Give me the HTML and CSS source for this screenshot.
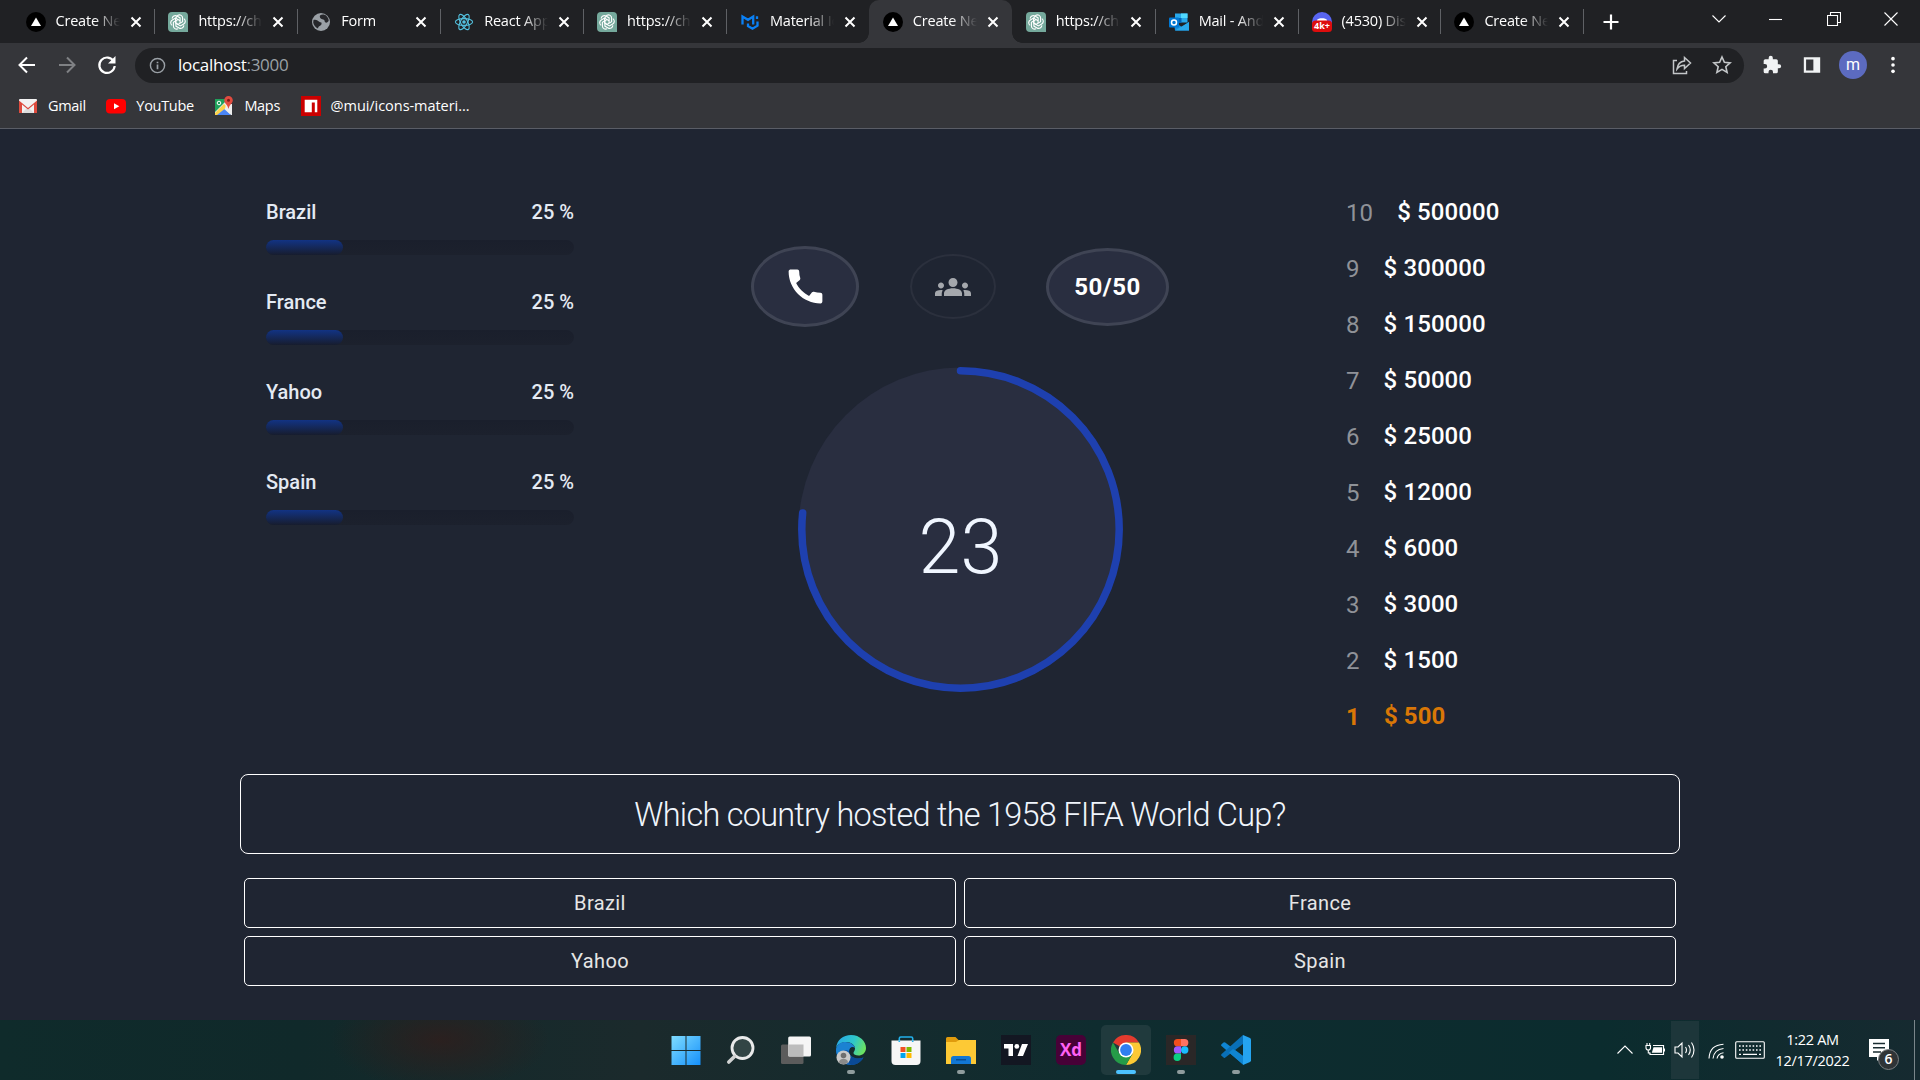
FILE: index.html
```html
<!DOCTYPE html>
<html lang="en">
<head>
<meta charset="utf-8">
<title>Create Next App</title>
<link rel="stylesheet" href="styles.css">
</head>
<body>
<svg class="defs" aria-hidden="true">
  <symbol id="i-vercel" viewBox="0 0 20 20"><circle cx="10" cy="10" r="10" fill="#000"/><path d="M10 5.4l5 8.700H5z" fill="#fff"/></symbol>
  <symbol id="i-gpt" viewBox="0 0 20 20"><path d="M4 0h12a4 4 0 0 1 4 4v16H4a4 4 0 0 1-4-4V4a4 4 0 0 1 4-4z" fill="#75a99c"/><g fill="none" stroke="#fff" stroke-width="1.1"><path d="M10 3.200a3.200 3.200 0 0 1 4.600 2.900v3.700L10 12.400 7.600 11V6.200z"/><path d="M10 3.200a3.200 3.200 0 0 1 4.600 2.900v3.700L10 12.400" transform="rotate(60 10 10)"/><path d="M10 3.200a3.200 3.200 0 0 1 4.600 2.900v3.700L10 12.400" transform="rotate(120 10 10)"/><path d="M10 3.200a3.200 3.200 0 0 1 4.600 2.900v3.700L10 12.400" transform="rotate(180 10 10)"/><path d="M10 3.200a3.200 3.200 0 0 1 4.600 2.900v3.700L10 12.400" transform="rotate(240 10 10)"/><path d="M10 3.200a3.200 3.200 0 0 1 4.600 2.900v3.700L10 12.400" transform="rotate(300 10 10)"/></g></symbol>
  <symbol id="i-x" viewBox="0 0 12 12"><path d="M1.500 1.500l9 9m0-9l-9 9" stroke="#fff" stroke-width="2" fill="none"/></symbol>
</svg>

<header class="tabs">
  <div class="tab"><svg class="fav"><use href="#i-vercel"/></svg><span class="tab-title">Create Next</span><svg class="close"><use href="#i-x"/></svg></div>
  <div class="tab"><svg class="fav"><use href="#i-gpt"/></svg><span class="tab-title">https://chat</span><svg class="close"><use href="#i-x"/></svg></div>
  <div class="tab"><svg class="fav" viewBox="0 0 20 20"><circle cx="10" cy="10" r="9" fill="#9aa0a6"/><path d="M2.500 8c2-1 4 .2 5.500 1.500s3 .3 2.500 2.500-3 1.500-3.500 4.500c-2.500-1-4.500-3.500-4.800-6z M9 3.500c2-1.500 5-1 6.500.5s2.200 3 2.200 5c-1 1-1.500 2-3 1.500s-.5-2.500-2.500-3-4-1.500-3.200-4z" fill="#26272b"/></svg><span class="tab-title">Form</span><svg class="close"><use href="#i-x"/></svg></div>
  <div class="tab"><svg class="fav" viewBox="0 0 20 20"><g fill="none" stroke="#53c1de" stroke-width="1.1"><ellipse cx="10" cy="10" rx="8.600" ry="3.400"/><ellipse cx="10" cy="10" rx="8.600" ry="3.400" transform="rotate(60 10 10)"/><ellipse cx="10" cy="10" rx="8.600" ry="3.400" transform="rotate(120 10 10)"/></g><circle cx="10" cy="10" r="1.800" fill="#53c1de"/></svg><span class="tab-title">React App</span><svg class="close"><use href="#i-x"/></svg></div>
  <div class="tab"><svg class="fav"><use href="#i-gpt"/></svg><span class="tab-title">https://chat</span><svg class="close"><use href="#i-x"/></svg></div>
  <div class="tab last-before"><svg class="fav" viewBox="0 0 20 20"><path d="M2.500 12.500V4.500l5.500 3.300 5.200-3.300v8M8 11.500v2.500l4.500 2.700 5-3V9.500M17 7V4.200" fill="none" stroke="#0a80f5" stroke-width="2.300"/></svg><span class="tab-title">Material Icons</span><svg class="close"><use href="#i-x"/></svg></div>
  <div class="tab active"><svg class="fav"><use href="#i-vercel"/></svg><span class="tab-title">Create Next</span><svg class="close"><use href="#i-x"/></svg></div>
  <div class="tab"><svg class="fav"><use href="#i-gpt"/></svg><span class="tab-title">https://chat</span><svg class="close"><use href="#i-x"/></svg></div>
  <div class="tab"><svg class="fav" viewBox="0 0 20 20"><path d="M6 1.500h12.500v9H6z" fill="#28a8ea"/><path d="M12 1.500h6.500v4.500H12z" fill="#50d9ff"/><path d="M6 6h6.500v5H6z" fill="#0364b8"/><path d="M5 10l8 5 7-5v8.500H6z" fill="#1490df"/><path d="M20 10v8.500H6z" fill="#28a8ea"/><rect y="5.500" width="10" height="10" rx="1" fill="#0078d4"/><circle cx="5" cy="10.500" r="2.500" fill="none" stroke="#fff" stroke-width="1.500"/></svg><span class="tab-title">Mail - Andrew</span><svg class="close"><use href="#i-x"/></svg></div>
  <div class="tab"><svg class="fav" viewBox="0 0 20 20"><circle cx="10" cy="10" r="10" fill="#5865f2"/><path d="M5 8c1-2.500 9-2.500 10 0v3H5z" fill="#fff"/><rect y="8.500" width="20" height="11.500" rx="3.500" fill="#dd0d0d"/><text x="10" y="17.300" class="fav-count">4k+</text></svg><span class="tab-title">(4530) Discord</span><svg class="close"><use href="#i-x"/></svg></div>
  <div class="tab"><svg class="fav"><use href="#i-vercel"/></svg><span class="tab-title">Create Next</span><svg class="close"><use href="#i-x"/></svg></div>
  <svg class="new-tab" viewBox="0 0 16 16"><path d="M8 .5v15M.5 8h15" stroke="#fff" stroke-width="2.200"/></svg>
  <div class="win-buttons">
    <svg viewBox="0 0 14 14"><path d="M.5 3.500L7 10l6.500-6.500" class="thin"/></svg>
    <svg viewBox="0 0 14 14"><path d="M0 7.500h13" class="thin"/></svg>
    <svg viewBox="0 0 14 14"><path d="M.5 3.500h10v10H.5zM3.500 3V.500h10v10H11" class="thin"/></svg>
    <svg viewBox="0 0 14 14"><path d="M.5.5l13 13m0-13l-13 13" class="thin"/></svg>
  </div>
</header>

<div class="toolbar">
  <svg class="nav" viewBox="0 0 24 24"><path d="M20 12H5m7-7.500L4.500 12l7.500 7.500" fill="none" stroke="#fff" stroke-width="2"/></svg>
  <svg class="nav" viewBox="0 0 24 24"><path d="M4 12h15m-7-7.500l7.500 7.500-7.500 7.500" fill="none" stroke="#7f8184" stroke-width="2"/></svg>
  <svg class="nav" viewBox="0 0 24 24"><path d="M18.800 8.500A7.700 7.700 0 1 0 19.700 13" fill="none" stroke="#fff" stroke-width="2.200"/><path d="M20.500 3v7.500H13z" fill="#fff"/></svg>
  <div class="omnibox">
    <svg class="info" viewBox="0 0 18 18"><circle cx="9" cy="9" r="7.500" fill="none" stroke="#9aa0a6" stroke-width="1.500"/><path d="M9 8v5M9 5v1.700" stroke="#9aa0a6" stroke-width="1.800"/></svg>
    <span class="url">localhost<span class="port">:3000</span></span>
    <svg class="share" viewBox="0 0 20 20"><path d="M5 5.500H1.500v13h13V16M12.500 2.500l6 5.500-6 5.500v-3.200c-3.500 0-5.500 1-7.500 3.700.5-4 3-7.500 7.500-8z" fill="none" stroke="#c4c7c9" stroke-width="1.500"/></svg>
    <svg class="star" viewBox="0 0 20 20"><path d="M10 2l2.400 5.300 5.700.6-4.300 3.800 1.300 5.700L10 14.400l-5.100 3 1.300-5.700L1.900 7.900l5.700-.6z" fill="none" stroke="#c4c7c9" stroke-width="1.600"/></svg>
  </div>
  <div class="tools">
    <svg viewBox="0 0 24 24"><path d="M20.500 11H19V7a2 2 0 0 0-2-2h-4V3.500a2.500 2.500 0 0 0-5 0V5H4a2 2 0 0 0-2 2v3.800h1.500a2.700 2.700 0 0 1 0 5.400H2V20a2 2 0 0 0 2 2h3.800v-1.500a2.700 2.700 0 0 1 5.400 0V22H17a2 2 0 0 0 2-2v-4h1.500a2.500 2.500 0 0 0 0-5z" fill="#f1f3f4"/></svg>
    <svg viewBox="0 0 22 22"><path d="M2 2.500h18v17H2z M4.500 5v12h8V5z" fill="#f1f3f4" fill-rule="evenodd"/></svg>
    <span class="avatar">m</span>
    <svg viewBox="0 0 22 22"><circle cx="11" cy="4" r="2" fill="#fff"/><circle cx="11" cy="11" r="2" fill="#fff"/><circle cx="11" cy="18" r="2" fill="#fff"/></svg>
  </div>
</div>

<nav class="bookmarks">
  <span class="bm"><svg viewBox="0 0 20 20"><rect x="1" y="3" width="18" height="14" rx="1" fill="#f2f2f2"/><path d="M4 17l6-6 6 6z" fill="#ddd"/><path d="M1 17V4.500l9 7.500 9-7.500V17h-3V8.500L10 13.500 4 8.500V17z" fill="#dd4b3e"/></svg>Gmail</span>
  <span class="bm"><svg viewBox="0 0 20 20"><rect y="3" width="20" height="14.500" rx="4" fill="#f00"/><path d="M8 7.200l5.300 3L8 13.300z" fill="#fff"/></svg>YouTube</span>
  <span class="bm"><svg viewBox="0 0 20 20"><path d="M1 3h15v16H1z" fill="#e8e8e8"/><path d="M1 3h13L1 16z" fill="#1fa15b"/><path d="M2 19l7-7 8 7z" fill="#4a86f7"/><path d="M1 17l9-9 3 3-10 8H1z" fill="#fed34a"/><path d="M12 8h6v11h-1l-6-6z" fill="#eee"/><circle cx="5" cy="7" r="1.800" fill="none" stroke="#fff"/><path d="M14.500 0a4.300 4.300 0 0 1 4.300 4.300c0 3-3.300 4.200-4.300 8.700-1-4.500-4.300-5.700-4.300-8.700A4.300 4.300 0 0 1 14.500 0z" fill="#e14b3f"/><circle cx="14.500" cy="4.300" r="1.500" fill="#7c1c18"/></svg>Maps</span>
  <span class="bm wide"><svg viewBox="0 0 20 20"><path d="M0 0h20v20H0z" fill="#cb0000"/><path d="M3.700 3.700h12.600v12.600h-2.500V6.500h-3v9.800H3.700z" fill="#fff"/></svg>@mui/icons-materi...</span>
</nav>

<main class="page">
  <section class="board">
    <div class="poll">
      <div class="poll-item"><div class="poll-label"><span>Brazil</span><span>25 %</span></div><div class="bar"><div class="fill" style="width:25%"></div></div></div>
      <div class="poll-item"><div class="poll-label"><span>France</span><span>25 %</span></div><div class="bar"><div class="fill" style="width:25%"></div></div></div>
      <div class="poll-item"><div class="poll-label"><span>Yahoo</span><span>25 %</span></div><div class="bar"><div class="fill" style="width:25%"></div></div></div>
      <div class="poll-item"><div class="poll-label"><span>Spain</span><span>25 %</span></div><div class="bar"><div class="fill" style="width:25%"></div></div></div>
    </div>
    <div class="center">
      <div class="lifelines">
        <div class="life phone"><svg viewBox="0 0 24 24"><path d="M20.010 15.380c-1.230 0-2.420-.2-3.530-.56-.35-.12-.74-.03-1.010.24l-1.570 1.970c-2.830-1.350-5.480-3.900-6.890-6.830l1.950-1.660c.27-.28.35-.67.24-1.020-.37-1.110-.56-2.300-.56-3.530 0-.54-.45-.99-.99-.99H4.190C3.650 3 3 3.240 3 3.990 3 13.280 10.730 21 20.010 21c.71 0 .99-.63.99-1.180v-3.450c0-.54-.45-.99-.99-.99z" fill="#fff"/></svg></div>
        <div class="life audience"><svg viewBox="0 0 24 24"><path d="M12 12.750c1.630 0 3.070.39 4.240.9 1.080.48 1.760 1.560 1.760 2.730V18H6v-1.610c0-1.180.68-2.260 1.760-2.730 1.170-.52 2.610-.91 4.240-.91zM4 13c1.100 0 2-.9 2-2s-.9-2-2-2-2 .9-2 2 .9 2 2 2zm1.130 1.100c-.37-.06-.74-.1-1.130-.1-.99 0-1.930.21-2.780.58C.48 14.900 0 15.620 0 16.430V18h4.500v-1.610c0-.83.23-1.610.63-2.290zM20 13c1.100 0 2-.9 2-2s-.9-2-2-2-2 .9-2 2 .9 2 2 2zm4 3.430c0-.81-.48-1.530-1.220-1.850-.85-.37-1.790-.58-2.780-.58-.39 0-.76.04-1.130.1.4.68.63 1.460.63 2.290V18H24v-1.570zM12 6c1.660 0 3 1.340 3 3s-1.340 3-3 3-3-1.340-3-3 1.340-3 3-3z" fill="#a5a8ad"/></svg></div>
        <div class="life fifty">50/50</div>
      </div>
      <div class="timer">
        <svg viewBox="0 0 325 325"><circle cx="162.500" cy="162.500" r="162" fill="#292e40"/><circle cx="162.500" cy="162.500" r="158.700" pathLength="360" class="arc"/></svg>
        <span class="seconds">23</span>
      </div>
    </div>
    <ol class="prizes">
      <li><span class="rank">10</span><span class="sum">$ 500000</span></li>
      <li><span class="rank">9</span><span class="sum">$ 300000</span></li>
      <li><span class="rank">8</span><span class="sum">$ 150000</span></li>
      <li><span class="rank">7</span><span class="sum">$ 50000</span></li>
      <li><span class="rank">6</span><span class="sum">$ 25000</span></li>
      <li><span class="rank">5</span><span class="sum">$ 12000</span></li>
      <li><span class="rank">4</span><span class="sum">$ 6000</span></li>
      <li><span class="rank">3</span><span class="sum">$ 3000</span></li>
      <li><span class="rank">2</span><span class="sum">$ 1500</span></li>
      <li class="current"><span class="rank">1</span><span class="sum">$ 500</span></li>
    </ol>
  </section>
  <h1 class="question">Which country hosted the 1958 FIFA World Cup?</h1>
  <div class="answers">
    <div class="answer">Brazil</div><div class="answer">France</div>
    <div class="answer">Yahoo</div><div class="answer">Spain</div>
  </div>
</main>

<footer class="taskbar">
  <div class="side"></div>
  <div class="apps">
    <div class="app"><svg viewBox="0 0 30 30"><defs><linearGradient id="gw" x1="0" y1="0" x2="1" y2="1"><stop offset="0" stop-color="#7fdcff"/><stop offset="1" stop-color="#1590fb"/></linearGradient></defs><path d="M.5 1.500h14v14H.5zM15.500 1.500h14v14h-14zM.5 16.500h14v14H.5zM15.500 16.500h14v14h-14z" transform="translate(0 -.5)" fill="url(#gw)"/></svg></div>
    <div class="app"><svg viewBox="0 0 30 30"><circle cx="16.500" cy="13" r="10.500" fill="#324545" stroke="#e9eaea" stroke-width="2.800"/><path d="M8.500 21.500L2.800 27" stroke="#d0d2d2" stroke-width="3.600" stroke-linecap="round"/></svg></div>
    <div class="app"><svg viewBox="0 0 30 30"><rect y="9.500" width="22.500" height="19.500" rx="1.500" fill="#5c5c5c"/><rect x="7.200" y="1.500" width="22.800" height="20" rx="1.500" fill="#f5f5f5"/><path d="M7.200 9.500h15.300v12H8.700a1.500 1.500 0 0 1-1.500-1.500z" fill="#bcbcbc"/></svg></div>
    <div class="app open"><svg viewBox="0 0 30 30"><defs><linearGradient id="ge" x1="0" y1=".3" x2="1" y2=".6"><stop offset="0" stop-color="#27a9e6"/><stop offset=".55" stop-color="#2fc7c9"/><stop offset="1" stop-color="#6ee35c"/></linearGradient></defs><path d="M0 15c0 8 6 15 15 15 5 0 9-2 12.500-7.500-5 2-12 1-14-4-1-3 0-5 1.500-6.500L8 8C3 8 .5 11 0 15z" fill="#0d5fb5"/><path d="M15 30c5 0 9-2 12.500-7.500-5 2-12 1-14-4C9 17 10 27 15 30z" fill="#0a4a96"/><path d="M0 13C1 5 7 0 15 0c9 0 15 6.500 15 13 0 5-4 7.500-7.500 7.500-3 0-5-1-5-2.500s1.500-2 1.500-4.500C19 10 15 7 10.500 7 5 7 1.500 9.500 0 13z" fill="url(#ge)"/><path d="M0 15C.5 9.500 5 7 9.500 7c5 0 9 3 9.500 6-2-2-6-1-6 3-5-3-9 2-11 5-1.200-2-2-4-2-6z" fill="#1b82d2"/><circle cx="7.500" cy="22.500" r="7" fill="#c9c9c9"/><circle cx="7.500" cy="20.500" r="2.800" fill="#6e6e6e"/><path d="M3 27.500c0-5 9-5 9 0-2 2.200-7 2.200-9 0z" fill="#8a8a8a"/></svg></div>
    <div class="app"><svg viewBox="0 0 30 30"><path d="M8.300 7V3.500Q8.300 2 9.800 2h10.400q1.500 0 1.500 1.500V7" fill="none" stroke="#22b0ea" stroke-width="1.600"/><path d="M.5 5.500h29V26a4 4 0 0 1-4 4h-21a4 4 0 0 1-4-4z" fill="#f6f6f6"/><path d="M8.300 7V5.500M21.700 7V5.500" stroke="#22b0ea" stroke-width="1.600"/><path d="M9.500 12h5v5h-5z" fill="#f25022"/><path d="M15.500 12h5v5h-5z" fill="#7fba00"/><path d="M9.500 18h5v5h-5z" fill="#00a4ef"/><path d="M15.500 18h5v5h-5z" fill="#ffb900"/></svg></div>
    <div class="app open"><svg viewBox="0 0 30 30"><path d="M0 3.500Q0 2 1.500 2h8L13 5.500h15.500Q30 5.500 30 7v8H0z" fill="#e09b0d"/><path d="M0 7h10l3-2h17v24H0z" fill="#fdc935"/><path d="M5 29v-5.500q0-2.500 2.500-2.500h15q2.500 0 2.500 2.500V29z" fill="#1277d3"/><path d="M10 24h10v1.500H10z" fill="#084e94"/></svg></div>
    <div class="app"><svg viewBox="0 0 30 30"><path d="M0 0h30v30H0z" fill="#131722"/><path d="M3 9h9v12H7.500v-7.500H3zM21 9h6l-5 12h-5.500z" fill="#fff"/><circle cx="15.800" cy="11.400" r="2.400" fill="#fff"/></svg></div>
    <div class="app"><svg viewBox="0 0 30 30"><rect width="30" height="30" rx="5" fill="#470137"/><text x="15" y="21.200" class="xd">Xd</text></svg></div>
    <div class="app open focused"><svg viewBox="0 0 30 30"><path d="M15 15L2 7.500A15 15 0 0 1 28 7.500H15z" fill="#e33b2e"/><path d="M28 7.500A15 15 0 0 1 15 30l6.500-11.200L15 7.500z" fill="#fcc934"/><path d="M2 7.500A15 15 0 0 0 15 30l6.500-11.200H8.500z" fill="#259b48"/><circle cx="15" cy="15" r="7.500" fill="#fff"/><circle cx="15" cy="15" r="5.900" fill="#2f7ef0"/></svg></div>
    <div class="app open"><svg viewBox="0 0 30 30"><path d="M0 0h30v30H0z" fill="#2a2727"/><path d="M15 4h-3.500a3.600 3.600 0 0 0 0 7.300H15z" fill="#f24e1e"/><path d="M15 4h3.700a3.600 3.600 0 0 1 0 7.300H15z" fill="#ff7262"/><path d="M15 11.300h-3.500a3.600 3.600 0 0 0 0 7.300H15z" fill="#a259ff"/><circle cx="18.700" cy="15" r="3.700" fill="#1abcfe"/><path d="M15 18.600h-3.500a3.700 3.700 0 1 0 3.500 3.700z" fill="#0acf83"/></svg></div>
    <div class="app open"><svg viewBox="0 0 30 30"><path d="M22 29.500L.5 11q-.8-.9 0-1.700l2-1.800q.8-.6 1.700 0L22 21z" fill="#0f85d2"/><path d="M.3 20.600q-.4-.8.3-1.500L22 .1V9L4 22.700q-.8.500-1.500-.1z" fill="#0970b8"/><path d="M22 29.500L8 17.500 12 14l10 7z" fill="#0f85d2"/><path d="M22 0l7 3q1 .5 1 1.700v20.600q0 1.200-1 1.700l-7 3z" fill="#25a4f0"/></svg></div>
  </div>
  <div class="tray">
    <svg class="chev" viewBox="0 0 16 10"><path d="M.5 8.500L8 1l7.500 7.500" class="thin"/></svg>
    <svg class="batt" viewBox="0 0 20 14"><path d="M8 2.500h10.500v9H5V9.500" fill="none" stroke="#fff" stroke-width="1.200"/><path d="M8.500 4.300h8.500v5.400H6.800zM19 5.500h1v3h-1z" fill="#fff"/><path d="M1 2.500h4.500v2.300a2.200 2.200 0 0 1-4.500 0zM2 0v2.500M4.700 0v2.500M3.300 7v3H5" fill="none" stroke="#fff" stroke-width="1.100"/></svg>
    <span class="vol"><svg viewBox="0 0 22 20"><path d="M1 7h3l4-4v14l-4-4H1zM11.500 7q2 3 0 6M14.500 5q3.500 5 0 10M17.500 2.500q5 7.500 0 15" class="thin"/></svg></span>
    <svg class="wifi" viewBox="0 0 16 16"><g class="thin"><path d="M1 15.500Q1.500 2 15.500 1.200"/><path d="M5 15.500Q6 6.500 15.500 5.500"/><path d="M9 15.500Q10 10.500 15.500 9.800"/></g><circle cx="14" cy="14" r="1.800" fill="#fff"/></svg>
    <svg class="kbd" viewBox="0 0 30 18"><rect x=".7" y=".7" width="28.600" height="16.600" rx="1" class="thin"/><path d="M4 5h22M4 9h22" stroke="#fff" stroke-width="1.500" stroke-dasharray="1.600 1.800"/><path d="M4 13.300h2m2 0h14m2 0h2" stroke="#fff" stroke-width="1.300"/></svg>
    <div class="clock"><span>1:22 AM</span><span>12/17/2022</span></div>
    <div class="notif"><svg viewBox="0 0 20 22"><path d="M0 0h20v18h-8l-4 4v-4H0z" fill="#fff"/><path d="M4 4.500h12M4 8.700h12M4 13h8" stroke="#1a2c31" stroke-width="1.400"/></svg><span class="badge">6</span></div>
  </div>
</footer>
</body>
</html>
```

FILE: styles.css
```css
* { box-sizing: border-box; }

body {
  margin: 0;
  width: 1920px;
  height: 1080px;
  overflow: hidden;
  display: flex;
  flex-direction: column;
  background: #1f2532;
  font-family: "Open Sans", "Noto Sans", sans-serif;
  color: #fff;
}

svg { display: block; flex: none; }
.defs { position: absolute; width: 0; height: 0; }
.thin { fill: none; stroke: #fff; stroke-width: 1.1; }

/* Browser tabs */
.tabs {
  height: 43px;
  flex: none;
  display: flex;
  align-items: center;
  padding-left: 11.5px;
  background: #202124;
}
.tab {
  position: relative;
  width: 142.9px;
  height: 43px;
  flex: none;
  display: flex;
  align-items: center;
  padding-left: 14px;
}
.tab::after {
  content: "";
  position: absolute;
  right: -1px;
  top: 9px;
  width: 1px;
  height: 25px;
  background: #5f6165;
}
.tab.active::after, .last-before::after {
  content: none;
}
.tab.active { background: #35363a; border-radius: 10px 10px 0 0; }
.tab.active::before {
  content: "";
  position: absolute;
  left: -10px;
  right: -10px;
  bottom: 0;
  height: 10px;
  background:
    radial-gradient(circle at 0 0, transparent 9.5px, #35363a 10px) left / 10px 10px no-repeat,
    radial-gradient(circle at 100% 0, transparent 9.5px, #35363a 10px) right / 10px 10px no-repeat;
}
.fav { width: 20px; height: 20px; }
.fav-count { font: 700 9px "Open Sans", sans-serif; fill: #fff; text-anchor: middle; }
.tab-title {
  width: 64px;
  margin-left: 10px;
  overflow: hidden;
  white-space: nowrap;
  font-size: 14.5px;
  letter-spacing: -0.2px;
  line-height: 24px;
  margin-top: -2px;
  -webkit-mask-image: linear-gradient(90deg, #000 60%, transparent);
  mask-image: linear-gradient(90deg, #000 60%, transparent);
}
.close { width: 12px; height: 12px; margin-left: 10px; }
.new-tab { width: 16px; height: 16px; margin-left: 20px; }
.win-buttons { display: flex; gap: 43.5px; margin: -5px 0 0 auto; padding-right: 22px; }
.win-buttons svg { width: 14px; height: 14px; }

/* Address bar */
.toolbar {
  height: 44px;
  flex: none;
  display: flex;
  align-items: center;
  padding: 0 17px 0 15px;
  background: #35363a;
}
.nav { width: 24px; height: 24px; margin-right: 16px; }
.omnibox {
  width: 1609.5px;
  height: 35px;
  display: flex;
  align-items: center;
  padding: 0 12px 0 14px;
  border-radius: 18px;
  background: #202124;
}
.info { width: 17px; height: 17px; }
.url { flex: 1; margin-left: 12px; font-size: 17px; letter-spacing: -0.3px; line-height: 24px; }
.port { color: #9aa0a6; }
.share { width: 20px; height: 20px; margin-right: 20px; }
.star { width: 20px; height: 20px; }
.tools { display: flex; align-items: center; margin-left: 18px; gap: 18px; }
.tools svg { width: 20px; height: 20px; }
.tools svg:nth-child(2) { margin: 0 -1px 0 2px; }
.tools svg:last-child { margin-left: -2px; }
.avatar {
  width: 28px;
  height: 28px;
  border-radius: 50%;
  background: #5c6bc0;
  font: 400 16px/27px Roboto, sans-serif;
  text-align: center;
}

.bookmarks {
  height: 42px;
  flex: none;
  display: flex;
  align-items: center;
  gap: 20.5px;
  padding: 0 0 4px 18px;
  background: #35363a;
  border-bottom: 1px solid #5a5d66;
  font-size: 14.5px;
  letter-spacing: -0.3px;
}
.bm { display: flex; align-items: center; gap: 10px; }
.bm svg { width: 20px; height: 20px; }
.bm.wide { letter-spacing: -0.05px; }

/* Quiz */
.page {
  width: 1440px;
  height: 891px;
  flex: none;
  margin: 0 auto;
  font-family: Roboto, sans-serif;
}
.board {
  height: 645px;
  display: grid;
  grid-template-columns: repeat(3, 480px);
}
.poll { width: 308px; margin-left: 26px; padding-top: 69px; }
.poll-item { height: 90px; }
.poll-label {
  display: flex;
  justify-content: space-between;
  font-size: 20px;
  font-weight: 500;
  line-height: 29px;
  color: #e4eaf3;
}
.bar { height: 15px; margin-top: 13px; border-radius: 8px; background: linear-gradient(#1a1f2c, #1c212d); }
.fill { height: 15px; border-radius: 8px; background: linear-gradient(#123384, #171d2e); }

.center { display: flex; flex-direction: column; align-items: center; padding-top: 117px; }
.lifelines { display: flex; align-items: center; gap: 51px; height: 81px; }
.life {
  display: flex;
  align-items: center;
  justify-content: center;
  border: 3px solid #3f4454;
  border-radius: 50%;
  background: #292e40;
}
.phone { width: 108px; height: 81px; }
.phone svg { width: 45px; height: 45px; }
.audience { width: 86px; height: 65px; margin-right: -1px; border: 2px solid #2b303d; background: none; }
.audience svg { width: 36px; height: 36px; }
.fifty { width: 123px; height: 78px; font-size: 24px; font-weight: 700; letter-spacing: 0.5px; }
.timer {
  width: 325px;
  height: 325px;
  margin: 40px 0 0 1px;
  display: grid;
}
.timer > * { grid-area: 1 / 1; }
.timer svg { width: 325px; height: 325px; }
.arc {
  fill: none;
  stroke: #1e40af;
  stroke-width: 7.5;
  stroke-linecap: round;
  stroke-dasharray: 276 360;
  transform: rotate(-90deg);
  transform-origin: center;
}
.seconds {
  place-self: center;
  margin-top: 35.5px;
  font-size: 75.5px;
  font-weight: 300;
  line-height: 76px;
  color: #f0f6ff;
}

.prizes { list-style: none; margin: 0; padding: 54.5px 0 0 146px; }
.prizes li { height: 56px; display: flex; align-items: center; gap: 24px; letter-spacing: 0.1px; }
.rank { font-size: 24px; color: #8f9298; margin-top: 2px; }
.sum { font-size: 24px; font-weight: 500; }
.current .rank, .current .sum { color: #d97706; font-weight: 700; }

.question {
  height: 80px;
  margin: 0;
  border: 1px solid #fff;
  border-radius: 8px;
  text-align: center;
  font-size: 32.5px;
  font-weight: 300;
  line-height: 80px;
  letter-spacing: -0.75px;
  color: #f0f5fc;
}
.answers {
  display: grid;
  grid-template-columns: 712px 712px;
  grid-auto-rows: 50px;
  gap: 8px;
  padding: 24px 4px 0;
}
.answer {
  border: 1px solid #fff;
  border-radius: 5px;
  text-align: center;
  font-size: 20px;
  line-height: 48px;
  font-weight: 400;
  letter-spacing: 0.4px;
  color: #e6e6e6;
}

/* Windows taskbar */
.taskbar {
  height: 60px;
  flex: none;
  display: flex;
  background:
    radial-gradient(ellipse 110px 50px at 440px 20px, rgba(52, 28, 26, 0.7), transparent),
    linear-gradient(90deg, #0f2b2b 0, #10292a 300px, #1b2a2c 640px, #0f2c2f 1100px, #0b2c2e 1600px, #162a30 1920px);
}
.side { width: 661px; flex: none; }
.apps { display: flex; gap: 5px; padding-top: 5px; }
.app {
  position: relative;
  width: 50px;
  height: 50px;
  padding: 10px;
}
.app svg { width: 30px; height: 30px; }
.app.focused { border-radius: 5px; background: #203a3d; }
.open::after {
  content: "";
  position: absolute;
  left: 21px;
  bottom: 1px;
  width: 8px;
  height: 4px;
  border-radius: 2px;
  background: #8f9c9d;
}
.focused::after { left: 15px; width: 20px; background: #4cc2ff; }
.xd { font: 700 17px "Open Sans", sans-serif; fill: #ff61f6; text-anchor: middle; }

.tray {
  flex: 1;
  display: flex;
  align-items: center;
  justify-content: flex-end;
  margin-right: 5px;
  border-right: 1px solid #7a868a;
}
.chev { width: 16px; height: 10px; margin-right: 12px; }
.batt { width: 20px; height: 14px; margin-right: 6px; }
.vol { display: flex; width: 28px; height: 58px; align-items: center; justify-content: center; background: #1d363a; }
.vol svg { width: 22px; height: 20px; }
.wifi { width: 16px; height: 16px; margin: 2px 11px 0 9px; }
.kbd { width: 30px; height: 18px; margin-right: 9px; }
.clock {
  width: 77px;
  display: flex;
  flex-direction: column;
  align-items: center;
  font-size: 14.5px;
  line-height: 21px;
  letter-spacing: -0.3px;
  padding-bottom: 1px;
}
.notif { position: relative; width: 20px; margin: 0 25px 0 18px; }
.notif svg { width: 20px; height: 22px; }
.badge {
  position: absolute;
  left: 9px;
  top: 10px;
  width: 21px;
  height: 21px;
  border: 1px solid #7b7f82;
  border-radius: 50%;
  background: #2f3437;
  font-size: 14px;
  font-weight: 600;
  line-height: 18px;
  text-align: center;
}
```
